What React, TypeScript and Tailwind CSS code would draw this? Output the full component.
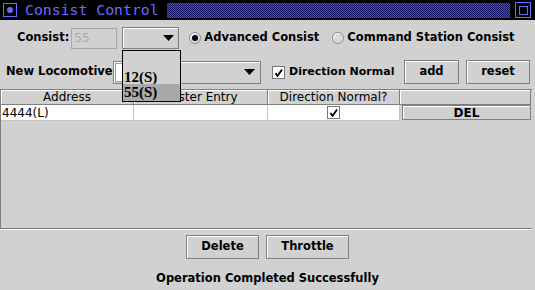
import React from "react";

const bevel =
  "border border-[#808080] shadow-[inset_1px_1px_0_#ffffff] bg-[#d1d1d1]";

function Arrow() {
  return (
    <svg width="11" height="6" viewBox="0 0 11 6" className="shrink-0">
      <polygon points="0,0 11,0 5.5,6" fill="#000" />
    </svg>
  );
}

function Radio({ on, label }: { on: boolean; label: string }) {
  return (
    <div className="flex items-center gap-[3px] whitespace-nowrap">
      <div className="w-[12px] h-[12px] rounded-full border border-[#8a8a8a] bg-[#dadada] shadow-[inset_1px_1px_0_#ffffff] flex items-center justify-center">
        {on && <div className="w-[6px] h-[6px] rounded-full bg-black" />}
      </div>
      <span className="font-bold">{label}</span>
    </div>
  );
}

function Check() {
  return (
    <div className="w-[13px] h-[13px] shrink-0 border border-[#777] bg-white flex items-center justify-center">
      <svg width="9" height="9" viewBox="0 0 9 9">
        <path d="M1.5 5 L3.5 8 L8 1.5" stroke="#000" strokeWidth="1.8" fill="none" />
      </svg>
    </div>
  );
}

const columns = [
  { name: "Address", w: "w-[133px]" },
  { name: "Roster Entry", w: "w-[134px]" },
  { name: "Direction Normal?", w: "w-[132px]" },
  { name: "", w: "w-[131px]" },
];

export default function App() {
  return (
    <div className="relative w-[535px] h-[290px] overflow-hidden bg-[#d1d1d1] text-[11.5px] text-black font-['DejaVu_Sans',sans-serif]">
      {/* title bar */}
      <div className="h-[20px] bg-black flex items-center pl-[3px] pr-[4px]">
        <div className="w-[14px] h-[14px] border border-[#6a6aff] flex items-center justify-center">
          <div className="w-[6px] h-[6px] rounded-full bg-[#6a6aff]" />
        </div>
        <span className="ml-[8px] text-[14.8px] leading-none text-[#6a6aff] font-['DejaVu_Sans_Mono',monospace] whitespace-nowrap">
          Consist Control
        </span>
        <div className="ml-[8px] flex-1 h-[15px] bg-[repeating-conic-gradient(#4848d8_0_25%,#141468_0_50%)] bg-[length:2px_2px]" />
        <div className="ml-[5px] w-[16px] h-[16px] border border-[#6a6aff] relative">
          <div className="absolute right-[2px] bottom-[2px] w-[9px] h-[9px] border border-[#6a6aff]" />
        </div>
      </div>

      {/* consist row */}
      <div className="flex items-center h-[22px] mt-[7px] pl-[17px] whitespace-nowrap">
        <span className="font-bold">Consist:</span>
        <div className="ml-[2px] w-[46px] h-[21px] border border-[#a6a6a6] flex items-center pl-[2px] text-[#a9a9a9] text-[12px]">
          55
        </div>
        <div className={`ml-[5px] w-[57px] h-[22px] ${bevel} flex items-center justify-end pr-[4px]`}>
          <Arrow />
        </div>
        <div className="ml-[10px]">
          <Radio on label="Advanced Consist" />
        </div>
        <div className="ml-[13px]">
          <Radio on={false} label="Command Station Consist" />
        </div>
      </div>

      {/* new locomotive row */}
      <div className="flex items-center h-[24px] mt-[11px] pl-[6px] whitespace-nowrap">
        <span className="font-bold w-[102px] shrink-0">New Locomotive</span>
        <div className={`ml-[5px] w-[148px] h-[23px] shrink-0 ${bevel} flex items-center pr-[5px]`}>
          <div className="w-[60px] h-[19px] ml-[1px] bg-white border border-[#9a9a9a]" />
          <div className="flex-1" />
          <Arrow />
        </div>
        <div className="ml-[11px] flex items-center gap-[4px] w-[120px] shrink-0">
          <Check />
          <span className="font-bold text-[11px]">Direction Normal</span>
        </div>
        <button className={`ml-[12px] w-[55px] h-[24px] shrink-0 ${bevel} font-bold`}>add</button>
        <button className={`ml-[7px] w-[64px] h-[24px] shrink-0 ${bevel} font-bold`}>reset</button>
      </div>

      {/* table */}
      <div className="mt-[5px] w-[532px] h-[140px] border-t border-l border-[#808080] border-b-[#7a7a7a] border-b shadow-[0_1px_0_#ffffff] text-[12px]">
        <div className="flex h-[15px]">
          {columns.map((c) => (
            <div
              key={c.name || "x"}
              className={`${c.w} h-[15px] border-r border-b border-[#808080] shadow-[inset_1px_1px_0_#ffffff] flex items-center justify-center leading-none`}
            >
              {c.name}
            </div>
          ))}
        </div>
        <div className="flex h-[16px]">
          <div className="w-[133px] bg-white border-r border-b border-[#c4c4c4] flex items-center pl-[1px] leading-none">
            4444(L)
          </div>
          <div className="w-[134px] bg-white border-r border-b border-[#c4c4c4]" />
          <div className="w-[132px] bg-white border-r border-b border-[#c4c4c4] flex items-center justify-center">
            <Check />
          </div>
          <div className="w-[131px] pl-[2px] pb-[1px] flex">
            <div className="flex-1 border border-[#808080] shadow-[inset_1px_1px_0_#ffffff] flex items-center justify-center font-bold leading-none">
              DEL
            </div>
          </div>
        </div>
      </div>

      {/* bottom buttons */}
      <div className="flex justify-center gap-[7px] mt-[6px]">
        <button className={`w-[73px] h-[24px] ${bevel} font-bold`}>Delete</button>
        <button className={`w-[83px] h-[24px] ${bevel} font-bold`}>Throttle</button>
      </div>
      <div className="text-center font-bold mt-[11px]">Operation Completed Successfully</div>

      {/* open dropdown popup */}
      <div className="absolute left-[122px] top-[50px] w-[59px] h-[52px] border border-black bg-[#d1d1d1] flex flex-col justify-end">
        <div className="h-[16px] pl-[1px] pt-[2px] flex items-center font-bold text-[15px] leading-none font-['Liberation_Serif',serif]">
          12(S)
        </div>
        <div className="h-[17px] pl-[1px] flex items-center font-bold text-[15px] leading-none bg-[#a9a9a9] font-['Liberation_Serif',serif]">
          55(S)
        </div>
      </div>
    </div>
  );
}
